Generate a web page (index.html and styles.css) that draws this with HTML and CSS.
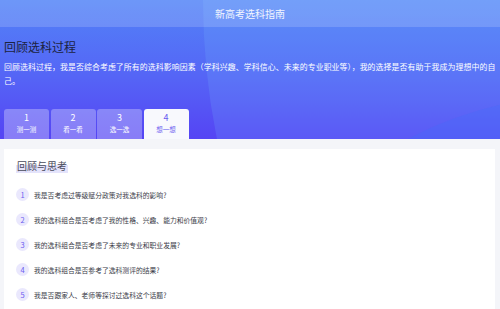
FILE: index.html
```html
<!DOCTYPE html>
<html lang="zh-CN">
<head>
  <meta charset="UTF-8" />
  <meta name="viewport" content="width=device-width, initial-scale=1.0"/>
  <title>新高考选科指南</title>
  <link rel="stylesheet" href="styles.css">
</head>
<body>

  <div class="hero">
    <div class="topbar">新高考选科指南</div>

    <div class="intro">
      <h1>回顾选科过程</h1>
      <p class="desc">回顾选科过程，我是否综合考虑了所有的选科影响因素（学科兴趣、学科信心、未来的专业职业等），我的选择是否有助于我成为理想中的自己。</p>
    </div>

    <div class="tabs">
      <div class="tab"><span class="num">1</span><span class="label">测一测</span></div>
      <div class="tab"><span class="num">2</span><span class="label">看一看</span></div>
      <div class="tab"><span class="num">3</span><span class="label">选一选</span></div>
      <div class="tab active"><span class="num">4</span><span class="label">想一想</span></div>
    </div>
  </div>

  <div class="content">
    <div class="card">
      <h2><span>回顾与思考</span></h2>
      <ul class="questions">
        <li><span class="dot">1</span>我是否考虑过等级赋分政策对我选科的影响?</li>
        <li><span class="dot">2</span>我的选科组合是否考虑了我的性格、兴趣、能力和价值观?</li>
        <li><span class="dot">3</span>我的选科组合是否考虑了未来的专业和职业发展?</li>
        <li><span class="dot">4</span>我的选科组合是否参考了选科测评的结果?</li>
        <li><span class="dot">5</span>我是否跟家人、老师等探讨过选科这个话题?</li>
      </ul>
    </div>
  </div>

</body>
</html>
```

FILE: styles.css
```css
* {
  margin: 0;
  padding: 0;
  box-sizing: border-box;
  font-family: "Noto Sans CJK SC", "Noto Sans", sans-serif;
}

body {
  width: 500px;
  height: 309px;
  overflow: hidden;
  background: #f4f5f9;
}

.hero {
  position: relative;
  overflow: hidden;
  background: linear-gradient(180deg, #5283f7 0%, #5565f6 55%, #5544f4 100%);
}

/* soft light circles behind the header */
.hero::before {
  content: "";
  position: absolute;
  left: 203px;
  top: -700px;
  width: 1400px;
  height: 1400px;
  border-radius: 50%;
  background: rgba(120, 190, 255, 0.18);
}

.hero::after {
  content: "";
  position: absolute;
  left: 330px;
  top: 90px;
  width: 600px;
  height: 300px;
  border-radius: 50%;
  background: rgba(60, 110, 250, 0.25);
}

.topbar {
  position: relative;
  z-index: 1;
  height: 27px;
  line-height: 27px;
  text-align: center;
  font-size: 10px;
  color: #f2f6ff;
  background: rgba(255, 255, 255, 0.16);
}

.intro {
  position: relative;
  z-index: 1;
  padding: 12px 4px 0;
  height: 82px;
}

h1 {
  font-size: 12px;
  font-weight: 400;
  color: #1c2340;
  line-height: 16px;
  margin-bottom: 5px;
}

.desc {
  font-size: 7.9px;
  letter-spacing: 0.1px;
  line-height: 14px;
  color: #ffffff;
}

.tabs {
  position: relative;
  z-index: 1;
  display: flex;
  gap: 1.5px;
  padding: 0 4px;
}

.tab {
  width: 45px;
  height: 30px;
  border-radius: 3px 3px 0 0;
  background: rgba(255, 255, 255, 0.3);
  color: #ffffff;
  display: flex;
  flex-direction: column;
  align-items: center;
  padding-top: 3px;
}

.tab .num {
  font-size: 9px;
  line-height: 11px;
}

.tab .label {
  font-size: 6.5px;
  line-height: 13px;
}

.tab.active {
  background: #f8f9fd;
  color: #6a5cf0;
}

.content {
  padding: 10px 5px 0 4px;
}

.card {
  background: #ffffff;
  height: 160px;
  padding: 10px 12px;
}

h2 {
  font-size: 10px;
  font-weight: 400;
  color: #4a4b5c;
  line-height: 14px;
  margin-bottom: 9px;
}

h2 span {
  background: linear-gradient(180deg, transparent 50%, #e4e3fb 50%);
  padding: 0 1px;
}

.questions {
  list-style: none;
}

.questions li {
  display: flex;
  align-items: center;
  height: 25px;
  font-size: 6.8px;
  color: #3a3b48;
}

.dot {
  width: 13px;
  height: 13px;
  border-radius: 50%;
  background: #eae8fd;
  color: #6a5cf0;
  font-size: 7.5px;
  display: flex;
  align-items: center;
  justify-content: center;
  margin-right: 5px;
  flex-shrink: 0;
}
```
